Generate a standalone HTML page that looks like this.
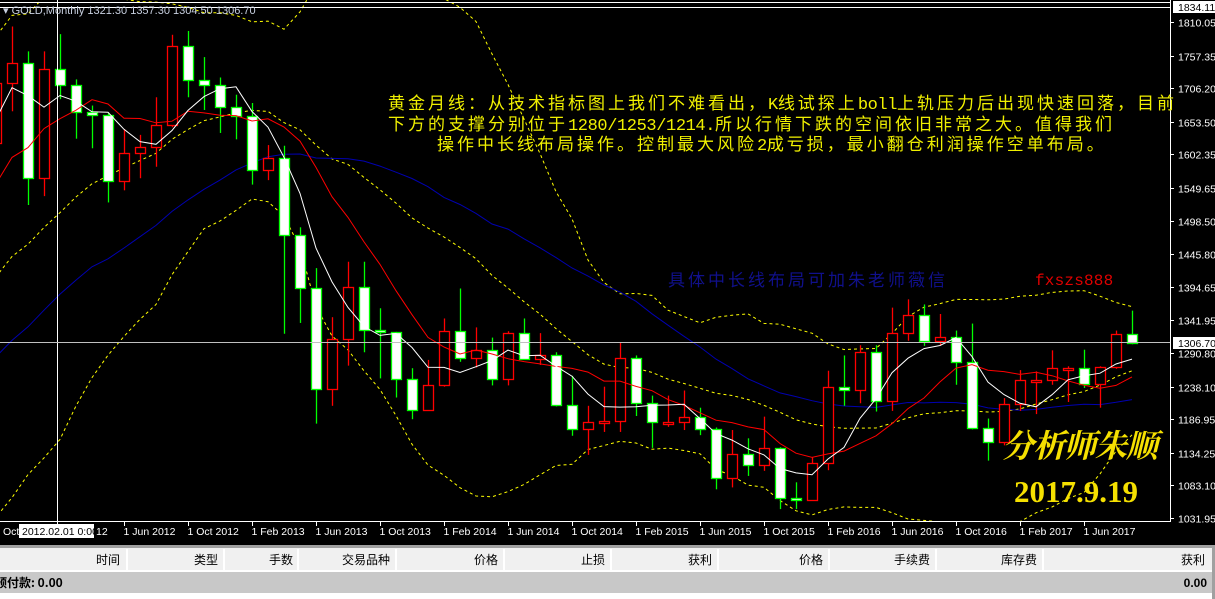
<!DOCTYPE html>
<html><head><meta charset="utf-8">
<style>
html,body{margin:0;padding:0;background:#000;width:1215px;height:599px;overflow:hidden}
svg{position:absolute;left:0;top:0}
.cn{font-family:"Noto Sans CJK SC","WenQuanYi Zen Hei",sans-serif}
</style></head>
<body>
<svg id="s" width="1215" height="599" xmlns="http://www.w3.org/2000/svg">
<rect width="1215" height="599" fill="#000"/>
<g id="chart"></g>
<line x1="0" y1="2.5" x2="1170" y2="2.5" stroke="#fff"/>
<line x1="0" y1="7.5" x2="1170" y2="7.5" stroke="#fff"/>
<line x1="1170.5" y1="0" x2="1170.5" y2="521" stroke="#fff"/>
<line x1="0" y1="521.5" x2="1171" y2="521.5" stroke="#fff"/>
<line x1="57.5" y1="0" x2="57.5" y2="521" stroke="#fff"/>
<line x1="0" y1="342.5" x2="1170" y2="342.5" stroke="#c0c0c0"/>
<g id="axis" font-family="Liberation Sans,sans-serif" font-size="10.5" fill="#fff"></g>
<text x="3" y="14" font-family="Liberation Sans,sans-serif" font-size="11" fill="#c8d0e0">▾ GOLD,Monthly  1321.30 1357.30 1304.50 1306.70</text>

<g fill="#f0f000" font-size="17" class="cn" letter-spacing="3">
<text x="388" y="109">黄金月线：从技术指标图上我们不难看出，<tspan font-family="Liberation Mono,monospace" font-size="17" letter-spacing="-0.4">K</tspan>线试探上<tspan font-family="Liberation Mono,monospace" font-size="17" letter-spacing="-0.4">boll</tspan>上轨压力后出现快速回落，目前</text>
<text x="388" y="130">下方的支撑分别位于<tspan font-family="Liberation Mono,monospace" font-size="17" letter-spacing="-0.4">1280/1253/1214.</tspan>所以行情下跌的空间依旧非常之大。值得我们</text>
<text x="437" y="150">操作中长线布局操作。控制最大风险<tspan font-family="Liberation Mono,monospace" font-size="17" letter-spacing="-0.4">2</tspan>成亏损，最小翻仓利润操作空单布局。</text>
</g>
<text x="668" y="286" class="cn" font-size="17" letter-spacing="3" fill="#10108c">具体中长线布局可加朱老师薇信</text>
<text x="1035" y="285" font-family="Liberation Mono,monospace" font-size="16" letter-spacing="0.2" fill="#e00000">fxszs888</text>
<text x="1002" y="457" font-family="Noto Serif CJK SC,serif" font-weight="bold" font-style="italic" font-size="32" fill="#f5e000" letter-spacing="-1">分析师朱顺</text>
<text x="1014" y="502" font-family="Liberation Serif,serif" font-weight="bold" font-size="31" fill="#f5e000">2017.9.19</text>

<rect x="0" y="545" width="1215" height="3" fill="#a0a0a0"/>
<rect x="0" y="548" width="1215" height="22" fill="#f0f0f0"/>
<rect x="0" y="570" width="1215" height="2" fill="#fff"/>
<rect x="0" y="572" width="1215" height="21" fill="#c8c8c8"/>
<rect x="0" y="593" width="1215" height="6" fill="#fff"/>
<rect x="1212" y="545" width="3" height="54" fill="#a0a0a0"/>
<g stroke="#fff" stroke-width="2">
<line x1="127" y1="549" x2="127" y2="570"/><line x1="224" y1="549" x2="224" y2="570"/><line x1="298" y1="549" x2="298" y2="570"/><line x1="396" y1="549" x2="396" y2="570"/><line x1="504" y1="549" x2="504" y2="570"/><line x1="611" y1="549" x2="611" y2="570"/><line x1="718" y1="549" x2="718" y2="570"/><line x1="829" y1="549" x2="829" y2="570"/><line x1="936" y1="549" x2="936" y2="570"/><line x1="1043" y1="549" x2="1043" y2="570"/>
</g>
<g class="cn" font-size="12" fill="#000" text-anchor="end">
<text x="120" y="564">时间</text><text x="218" y="564">类型</text><text x="293" y="564">手数</text><text x="390" y="564">交易品种</text><text x="498" y="564">价格</text><text x="605" y="564">止损</text><text x="712" y="564">获利</text><text x="823" y="564">价格</text><text x="930" y="564">手续费</text><text x="1037" y="564">库存费</text><text x="1205" y="564">获利</text>
</g>
<text x="-5" y="587" class="cn" font-size="12" font-weight="bold" fill="#000">预付款: 0.00</text>
<text x="1207" y="587" font-family="Liberation Sans,sans-serif" font-size="12" font-weight="bold" fill="#000" text-anchor="end">0.00</text>
</svg>
<script>
(function(){
var NS="http://www.w3.org/2000/svg";
function Y(p){return 22+(1810.05-p)*0.6375;}
var pre=[927,942,916,883,979,927,955,955,1008,1040,1182,1097,1081,1118,1113,1179,1212,1244,1181,1248,1307,1357,1386,1421,1332,1411,1439,1556,1536,1500,1628,1826,1620];
var o=[[1620,1764,1604,1715],[1715,1803,1670,1746],[1746,1764,1523,1565],[1565,1764,1537,1737],[1737,1791,1689,1711],[1711,1720,1627,1669],[1669,1679,1612,1664],[1664,1668,1527,1561],[1561,1642,1546,1604],[1604,1633,1565,1614],[1614,1692,1583,1648],[1648,1790,1645,1772],[1772,1796,1692,1719],[1719,1755,1672,1712],[1712,1723,1636,1676],[1676,1696,1626,1663],[1663,1683,1555,1578],[1578,1617,1562,1596],[1596,1616,1321,1476],[1476,1488,1338,1393],[1393,1424,1180,1234],[1234,1347,1208,1313],[1313,1434,1271,1395],[1395,1434,1292,1327],[1327,1361,1251,1323],[1323,1324,1221,1250],[1250,1267,1187,1202],[1202,1280,1200,1240],[1240,1345,1238,1326],[1326,1392,1277,1283],[1283,1331,1268,1296],[1296,1315,1240,1250],[1250,1325,1240,1322],[1322,1345,1280,1282],[1282,1322,1272,1287],[1287,1292,1207,1210],[1210,1255,1161,1171],[1171,1208,1131,1182],[1182,1238,1167,1184],[1184,1308,1167,1283],[1283,1287,1192,1213],[1213,1224,1142,1183],[1183,1224,1175,1183],[1183,1232,1170,1190],[1190,1205,1162,1171],[1171,1174,1077,1095],[1095,1170,1080,1132],[1132,1157,1098,1115],[1115,1191,1106,1142],[1142,1143,1046,1064],[1064,1088,1046,1061],[1061,1127,1061,1118],[1118,1263,1107,1238],[1238,1287,1208,1233],[1233,1303,1212,1292],[1292,1303,1199,1215],[1215,1362,1200,1322],[1322,1375,1310,1351],[1351,1367,1302,1309],[1309,1352,1302,1316],[1316,1326,1241,1277],[1277,1337,1171,1173],[1173,1188,1122,1151],[1151,1220,1146,1211],[1211,1264,1200,1248],[1248,1262,1195,1249],[1249,1295,1241,1268],[1268,1270,1214,1268],[1268,1296,1236,1242],[1242,1270,1205,1269],[1269,1326,1266,1321],[1321.3,1357.3,1304.5,1306.7]];
var c=pre.slice();o.forEach(function(b){c.push(b[3]);});
var off=pre.length;
function X(k){return 16*k-4;}
function sma(i,n){var s=0;for(var j=i-n+1;j<=i;j++)s+=c[j];return s/n;}
function sd(i,n,m){var s=0;for(var j=i-n+1;j<=i;j++)s+=(c[j]-m)*(c[j]-m);return Math.sqrt(s/n);}
var g=document.getElementById("chart");
function el(t,a){var e=document.createElementNS(NS,t);for(var k in a)e.setAttribute(k,a[k]);g.appendChild(e);return e;}
var L={w:[],r:[],b:[],u:[],m:[],d:[]};
for(var k=-1;k<o.length;k++){var i=off+k,x=X(k);
 L.w.push(x+","+Y(sma(i,5)).toFixed(1));
 L.r.push(x+","+Y(sma(i,10)).toFixed(1));
 L.b.push(x+","+Y(sma(i,30)).toFixed(1));
 var m=sma(i,20),s=sd(i,20,m);
 L.u.push(x+","+Y(m+2*s).toFixed(1));L.m.push(x+","+Y(m).toFixed(1));L.d.push(x+","+Y(m-2*s).toFixed(1));}
var cg=el("clipPath",{id:"cp"});var cr=document.createElementNS(NS,"rect");cr.setAttribute("x",0);cr.setAttribute("y",0);cr.setAttribute("width",1170);cr.setAttribute("height",521);cg.appendChild(cr);
var gg=el("g",{"clip-path":"url(#cp)"});
function pl(pts,col,dash){var e=document.createElementNS(NS,"polyline");e.setAttribute("points",pts.join(" "));e.setAttribute("fill","none");e.setAttribute("stroke",col);e.setAttribute("stroke-width","1");if(dash)e.setAttribute("stroke-dasharray",dash);gg.appendChild(e);}
pl(L.u,"#ffff00","3,3");pl(L.m,"#ffff00","3,3");pl(L.d,"#ffff00","3,3");
pl(L.b,"#0000b0");
o.forEach(function(b,k){var x=X(k)+0.5,op=b[0],h=b[1],l=b[2],cl=b[3];var bull=cl>=op;var col=bull?"#ff0000":"#00ff00";
 var ln=document.createElementNS(NS,"line");ln.setAttribute("x1",x);ln.setAttribute("x2",x);ln.setAttribute("y1",Y(h));ln.setAttribute("y2",Y(l));ln.setAttribute("stroke",col);ln.setAttribute("stroke-width",1.3);gg.appendChild(ln);
 var t=Math.round(Y(Math.max(op,cl)))+0.5,bt=Math.round(Y(Math.min(op,cl)))+0.5;if(bt-t<2)bt=t+2;
 var r=document.createElementNS(NS,"rect");r.setAttribute("x",x-5);r.setAttribute("y",t);r.setAttribute("width",10);r.setAttribute("height",bt-t);r.setAttribute("fill",bull?"#000":"#fff");r.setAttribute("stroke",col);r.setAttribute("stroke-width",1.3);gg.appendChild(r);});
pl(L.r,"#ff0000");pl(L.w,"#ffffff");
var ax=document.getElementById("axis");
function tx(x,y,s,a){var e=document.createElementNS(NS,"text");e.setAttribute("x",x);e.setAttribute("y",y);if(a)e.setAttribute("text-anchor",a);e.textContent=s;ax.appendChild(e);return e;}
function li(x1,y1,x2,y2){var e=document.createElementNS(NS,"line");e.setAttribute("x1",x1);e.setAttribute("y1",y1);e.setAttribute("x2",x2);e.setAttribute("y2",y2);e.setAttribute("stroke","#fff");ax.appendChild(e);}
var pr=["1810.05","1757.35","1706.20","1653.50","1602.35","1549.65","1498.50","1445.80","1394.65","1341.95","1290.80","1238.10","1186.95","1134.25","1083.10","1031.95"];
pr.forEach(function(p){var y=Math.round(Y(+p))+0.5;li(1170,y,1174,y);tx(1178,y+4,p);});
var bx=document.createElementNS(NS,"rect");bx.setAttribute("x",1173);bx.setAttribute("y",1);bx.setAttribute("width",42);bx.setAttribute("height",12);bx.setAttribute("fill","#fff");ax.appendChild(bx);
tx(1178,11,"1834.11").setAttribute("fill","#000");
var b2=document.createElementNS(NS,"rect");b2.setAttribute("x",1173);b2.setAttribute("y",337);b2.setAttribute("width",42);b2.setAttribute("height",12);b2.setAttribute("fill","#fff");ax.appendChild(b2);
tx(1178,347,"1306.70").setAttribute("fill","#000");
var dl=["1 Jun 2012","1 Oct 2012","1 Feb 2013","1 Jun 2013","1 Oct 2013","1 Feb 2014","1 Jun 2014","1 Oct 2014","1 Feb 2015","1 Jun 2015","1 Oct 2015","1 Feb 2016","1 Jun 2016","1 Oct 2016","1 Feb 2017","1 Jun 2017"];
dl.forEach(function(d,j){var x=124+64*j+0.5;li(x,521,x,526);tx(x-1,535,d);});
tx(3,535,"Oct");tx(96,535,"12");
var b3=document.createElementNS(NS,"rect");b3.setAttribute("x",19);b3.setAttribute("y",524);b3.setAttribute("width",75);b3.setAttribute("height",14);b3.setAttribute("fill","#fff");ax.appendChild(b3);
tx(22,535,"2012.02.01 0:00").setAttribute("fill","#000");
li(57.5,521,57.5,524);
})();
</script>
</body></html>
